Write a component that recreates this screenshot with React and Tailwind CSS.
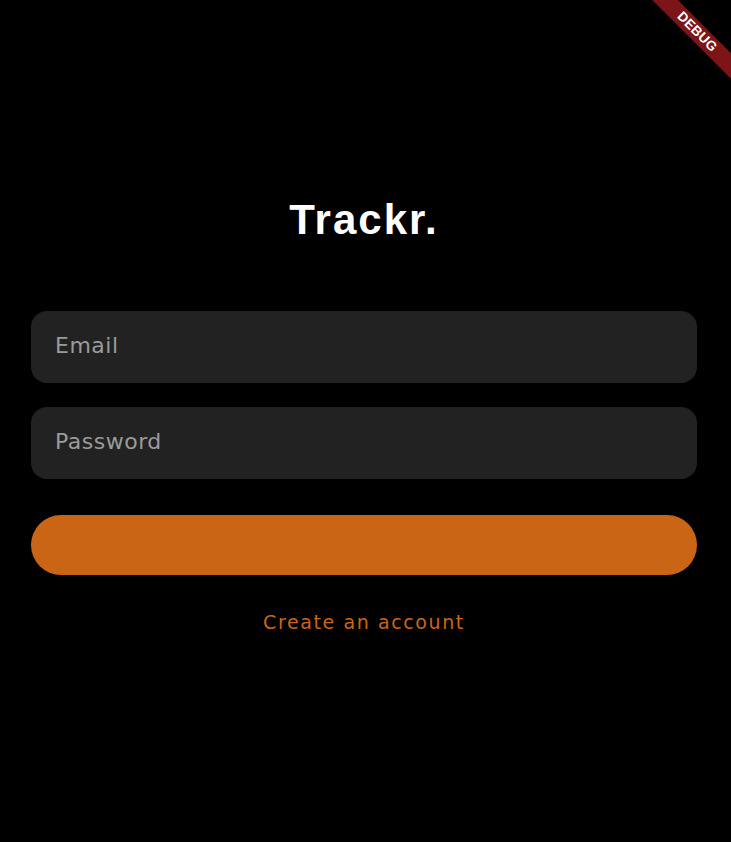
import React from 'react';

const App = () => {
    return (
        <div className="relative w-[731px] h-[842px] bg-black overflow-hidden font-['DejaVu_Sans',sans-serif]">
            {/* debug ribbon */}
            <div className="absolute left-[637px] top-[23px] w-[120px] h-[18px] rotate-45 bg-[#7d1518] flex items-center justify-center">
                <span className="text-white text-[13.5px] font-bold tracking-[0.3px] font-['Liberation_Sans',sans-serif]">DEBUG</span>
            </div>

            <div className="w-[666px] ml-[31px] flex flex-col pt-[196px]">
                <h1 className="h-[48px] flex items-center justify-center text-white text-[42px] font-bold tracking-[2px] leading-none font-['Liberation_Sans',sans-serif]">
                    Trackr.
                </h1>

                <div className="mt-[67px] flex flex-col gap-6">
                    <div className="h-[72px] rounded-2xl bg-[#222222] flex items-center pl-6 pb-[3px]">
                        <input
                            type="email"
                            placeholder="Email"
                            className="w-full bg-transparent outline-none text-[22px] text-white placeholder:text-[#9a9a9a] tracking-[0.5px]"
                        />
                    </div>
                    <div className="h-[72px] rounded-2xl bg-[#222222] flex items-center pl-6 pb-[3px]">
                        <input
                            type="password"
                            placeholder="Password"
                            className="w-full bg-transparent outline-none text-[22px] text-white placeholder:text-[#9a9a9a] tracking-[0.5px]"
                        />
                    </div>
                </div>

                <button className="mt-9 h-[60px] rounded-full bg-[#ca6516]"></button>

                <button className="mt-[38px] self-center text-[19px] text-[#ca6516] tracking-[1.6px] leading-none">
                    Create an account
                </button>
            </div>
        </div>
    );
};

export default App;
